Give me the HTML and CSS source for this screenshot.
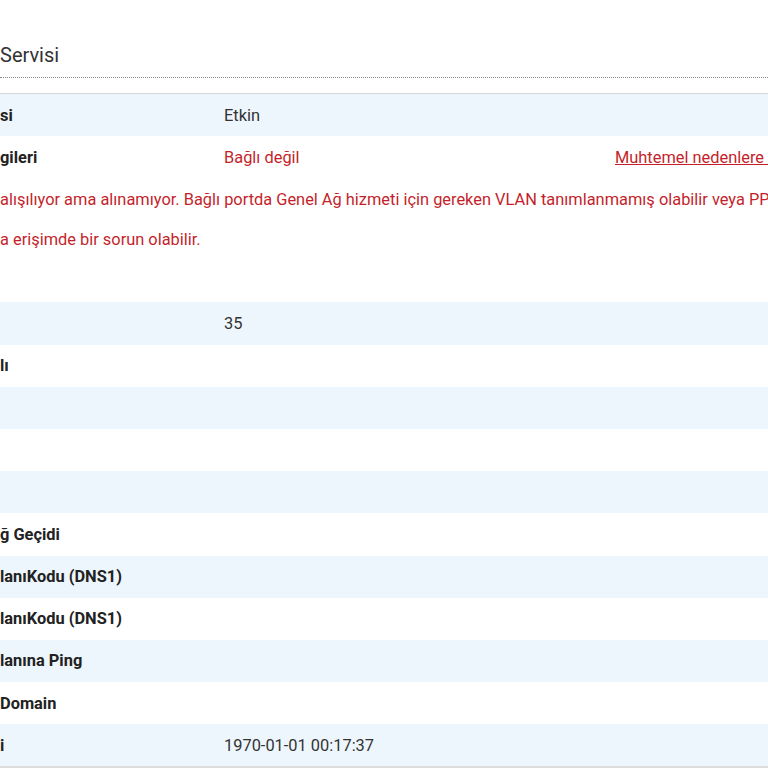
FILE: index.html
```html
<!DOCTYPE html>
<html lang="tr">
<head>
<meta charset="utf-8">
<link rel="stylesheet" href="styles.css">
</head>
<body>
<div class="page">
  <div class="header"><h2 class="title">Servisi</h2></div>
  <div class="table">
    <div class="row alt"><div class="label">si</div><div class="value">Etkin</div></div>
    <div class="row"><div class="label">gileri</div><div class="value err">Bağlı değil</div><a class="link" href="#">Muhtemel nedenlere bakınız</a></div>
    <div class="msg">
      <p>alışılıyor ama alınamıyor. Bağlı portda Genel Ağ hizmeti için gereken VLAN tanımlanmamış olabilir veya PPPoE</p>
      <p>a erişimde bir sorun olabilir.</p>
    </div>
    <div class="row alt"><div class="label"></div><div class="value">35</div></div>
    <div class="row"><div class="label">lı</div><div class="value"></div></div>
    <div class="row alt"><div class="label"></div><div class="value"></div></div>
    <div class="row"><div class="label"></div><div class="value"></div></div>
    <div class="row alt"><div class="label"></div><div class="value"></div></div>
    <div class="row"><div class="label">ğ Geçidi</div><div class="value"></div></div>
    <div class="row alt"><div class="label">lanıKodu (DNS1)</div><div class="value"></div></div>
    <div class="row"><div class="label">lanıKodu (DNS1)</div><div class="value"></div></div>
    <div class="row alt"><div class="label">lanına Ping</div><div class="value"></div></div>
    <div class="row"><div class="label">Domain</div><div class="value"></div></div>
    <div class="row alt last"><div class="label">i</div><div class="value">1970-01-01 00:17:37</div></div>
  </div>
</div>
</body>
</html>
```
FILE: styles.css
```css
html, body {
  margin: 0;
  padding: 0;
  background: #ffffff;
  overflow: hidden;
}
body {
  font-family: Roboto, "Liberation Sans", Arial, sans-serif;
  color: #333333;
  width: 768px;
  height: 768px;
}
.page {
  width: 768px;
}
.header {
  padding-top: 40px;
  padding-bottom: 7px;
  border-bottom: 1px dotted #8a8a8a;
}
.title {
  margin: 0;
  font-size: 20px;
  font-weight: 400;
  line-height: 30px;
  color: #333333;
}
.table {
  margin-top: 15px;
  border-top: 1px solid #d6d6d6;
}
.row {
  display: grid;
  grid-template-columns: 224px 391px 1fr;
  height: 42.2px;
  align-items: center;
  font-size: 16.4px;
  white-space: nowrap;
  background: #ffffff;
}
.row.alt {
  background: #eef6fd;
}
.row.last {
  border-bottom: 2px solid #dcdcdc;
}
.label {
  font-weight: 700;
  color: #222222;
}
.value {
  color: #333333;
}
.err {
  color: #c41f2b;
}
.link {
  color: #c41f2b;
  text-decoration: underline;
  overflow: hidden;
}
.msg {
  padding-top: 2px;
  padding-bottom: 42px;
  color: #c41f2b;
  font-size: 16.4px;
}
.msg p {
  margin: 0;
  line-height: 40px;
  white-space: nowrap;
  overflow: hidden;
}
```
